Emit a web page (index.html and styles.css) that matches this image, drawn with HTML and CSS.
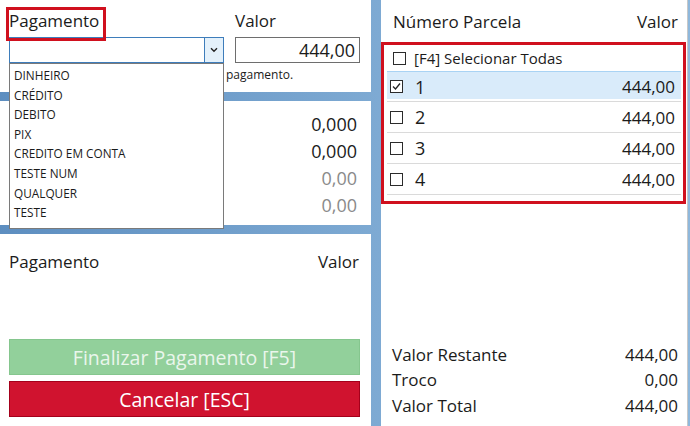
FILE: index.html
```html
<!DOCTYPE html>
<html lang="pt-BR">
<head>
<meta charset="utf-8">
<title>Pagamento</title>
<link rel="stylesheet" href="styles.css">
</head>
<body>
<div class="screen">
  <div class="left">
    <section class="panel panel-entry">
      <div class="entry-row">
        <div class="field field-pay">
          <span class="label label-marked">Pagamento</span>
          <div class="combo">
            <div class="combo-text"></div>
            <div class="combo-btn">
              <svg width="8" height="6" viewBox="0 0 8 6"><path d="M1 1.2 L4 4.2 L7 1.2" fill="none" stroke="#222" stroke-width="1.4"/></svg>
            </div>
          </div>
        </div>
        <div class="field field-val">
          <span class="label">Valor</span>
          <div class="input">444,00</div>
        </div>
      </div>
      <div class="hint">pagamento.</div>
      <ul class="dropdown">
        <li>DINHEIRO</li>
        <li>CRÉDITO</li>
        <li>DEBITO</li>
        <li>PIX</li>
        <li>CREDITO EM CONTA</li>
        <li>TESTE NUM</li>
        <li>QUALQUER</li>
        <li>TESTE</li>
      </ul>
    </section>
    <section class="panel panel-totals">
      <div class="trow">0,000</div>
      <div class="trow">0,000</div>
      <div class="trow muted">0,00</div>
      <div class="trow muted">0,00</div>
    </section>
    <section class="panel panel-payments">
      <div class="pay-head"><span>Pagamento</span><span>Valor</span></div>
      <div class="pay-list"></div>
      <div class="buttons">
        <button class="btn btn-finish">Finalizar Pagamento [F5]</button>
        <button class="btn btn-cancel">Cancelar [ESC]</button>
      </div>
    </section>
  </div>
  <section class="panel right">
    <div class="r-head"><span>Número Parcela</span><span>Valor</span></div>
    <div class="marked-box">
      <div class="select-all"><span class="cb"></span><span>[F4] Selecionar Todas</span></div>
      <div class="inst selected">
        <span class="cb checked"><svg width="11" height="11" viewBox="0 0 11 11"><path d="M2 5.5 L4.5 8 L9 2.5" fill="none" stroke="#222" stroke-width="1.3"/></svg></span>
        <span class="num">1</span><span class="amt">444,00</span>
      </div>
      <div class="inst"><span class="cb"></span><span class="num">2</span><span class="amt">444,00</span></div>
      <div class="inst"><span class="cb"></span><span class="num">3</span><span class="amt">444,00</span></div>
      <div class="inst"><span class="cb"></span><span class="num">4</span><span class="amt">444,00</span></div>
    </div>
    <div class="summary">
      <div class="srow"><span>Valor Restante</span><span>444,00</span></div>
      <div class="srow"><span>Troco</span><span>0,00</span></div>
      <div class="srow"><span>Valor Total</span><span>444,00</span></div>
    </div>
  </section>
</div>
</body>
</html>
```
FILE: styles.css
```css
* { box-sizing: border-box; }
html, body { margin: 0; padding: 0; }
body {
  width: 690px;
  height: 426px;
  overflow: hidden;
  font-family: "Segoe UI", "Open Sans", "Noto Sans", sans-serif;
  color: #1b1b1b;
  background: linear-gradient(90deg, #5d8ec0 0%, #7eaad3 55%, #8fb8dc 100%);
}
.screen {
  display: grid;
  grid-template-columns: 371px 307px;
  column-gap: 10px;
  height: 426px;
}
.panel { background: #fff; }
.left {
  display: grid;
  grid-template-rows: 92px 124px 1fr;
  row-gap: 9px;
}
.panel-entry {
  position: relative;
  z-index: 2;
  padding: 10px 0 0 9px;
}
.entry-row { display: flex; gap: 11px; }
.field { display: flex; flex-direction: column; gap: 5px; }
.field-pay { width: 215px; }
.field-val { width: 125px; }
.label {
  font-size: 17px;
  line-height: 22px;
  align-self: flex-start;
}
.label-marked { position: relative; }
.label-marked::after {
  content: "";
  position: absolute;
  left: -3px;
  right: -7px;
  top: -3px;
  bottom: -9px;
  border: 3px solid #d0101e;
}
.combo {
  display: flex;
  height: 26px;
  border: 1px solid #3e7dbb;
  background: #fff;
}
.combo-text { flex: 1; }
.combo-btn {
  width: 19px;
  background: #e4f1fb;
  border-left: 1px solid #3e7dbb;
  display: flex;
  align-items: center;
  justify-content: center;
}
.input {
  height: 26px;
  border: 1px solid #6e6e6e;
  text-align: right;
  font-size: 18px;
  line-height: 24px;
  padding-right: 4px;
}
.hint {
  font-size: 12px;
  line-height: 16px;
  margin: 4px 0 0 217px;
}
.dropdown {
  position: absolute;
  left: 9px;
  top: 63px;
  width: 215px;
  height: 166px;
  margin: 0;
  padding: 2px 0 0 4px;
  list-style: none;
  background: #fff;
  border: 1px solid #7a7a7a;
  font-size: 11.8px;
  line-height: 19.6px;
  color: #1a1a1a;
}
.panel-totals {
  padding: 10px 14px 0 0;
}
.trow {
  text-align: right;
  font-size: 18px;
  line-height: 27px;
}
.trow.muted { color: #8a8a8a; }
.panel-payments {
  display: flex;
  flex-direction: column;
  padding: 17px 11px 9px 9px;
}
.pay-head {
  display: flex;
  justify-content: space-between;
  font-size: 17px;
  line-height: 22px;
  padding-right: 1px;
}
.pay-list { flex: 1; }
.buttons { display: flex; flex-direction: column; gap: 6px; }
.btn {
  height: 36px;
  font-family: inherit;
  font-size: 19.5px;
  padding: 0;
  cursor: default;
}
.btn-finish {
  background: #92d09b;
  border: 1px solid #85c68e;
  color: #eaf6ec;
}
.btn-cancel {
  background: #d0132f;
  border: 1px solid #a4001b;
  color: #fff;
}
.right {
  display: flex;
  flex-direction: column;
  border-right: 1px solid #c8c8c8;
}
.r-head {
  display: flex;
  justify-content: space-between;
  font-size: 17px;
  line-height: 22px;
  padding: 11px 9px 0 12px;
  height: 42px;
}
.marked-box {
  width: 305px;
  height: 162px;
  border: 3px solid #d0101e;
  padding: 0 2px 0 3px;
}
.select-all {
  display: flex;
  align-items: center;
  gap: 8px;
  height: 26px;
  padding-left: 6px;
  font-size: 15px;
}
.cb {
  width: 13px;
  height: 13px;
  border: 1px solid #2b2b2b;
  background: #fff;
  display: inline-flex;
  align-items: center;
  justify-content: center;
  flex: none;
}
.inst {
  display: flex;
  align-items: center;
  height: 31px;
  border-bottom: 1px solid #dadada;
  padding: 0 6px 0 3px;
  font-size: 17px;
}
.inst.selected {
  background: #d9ebfa;
  border-top: 1px solid #a9d3f4;
  border-bottom: 1px solid #dadada;
  box-shadow: inset 0 -2px 0 #fff;
}
.num { margin-left: 12px; font-size: 18px; }
.amt { margin-left: auto; }
.summary {
  margin-top: auto;
  padding: 0 9px 8px 11px;
}
.srow {
  display: flex;
  justify-content: space-between;
  font-size: 17px;
  line-height: 25.5px;
}
```
